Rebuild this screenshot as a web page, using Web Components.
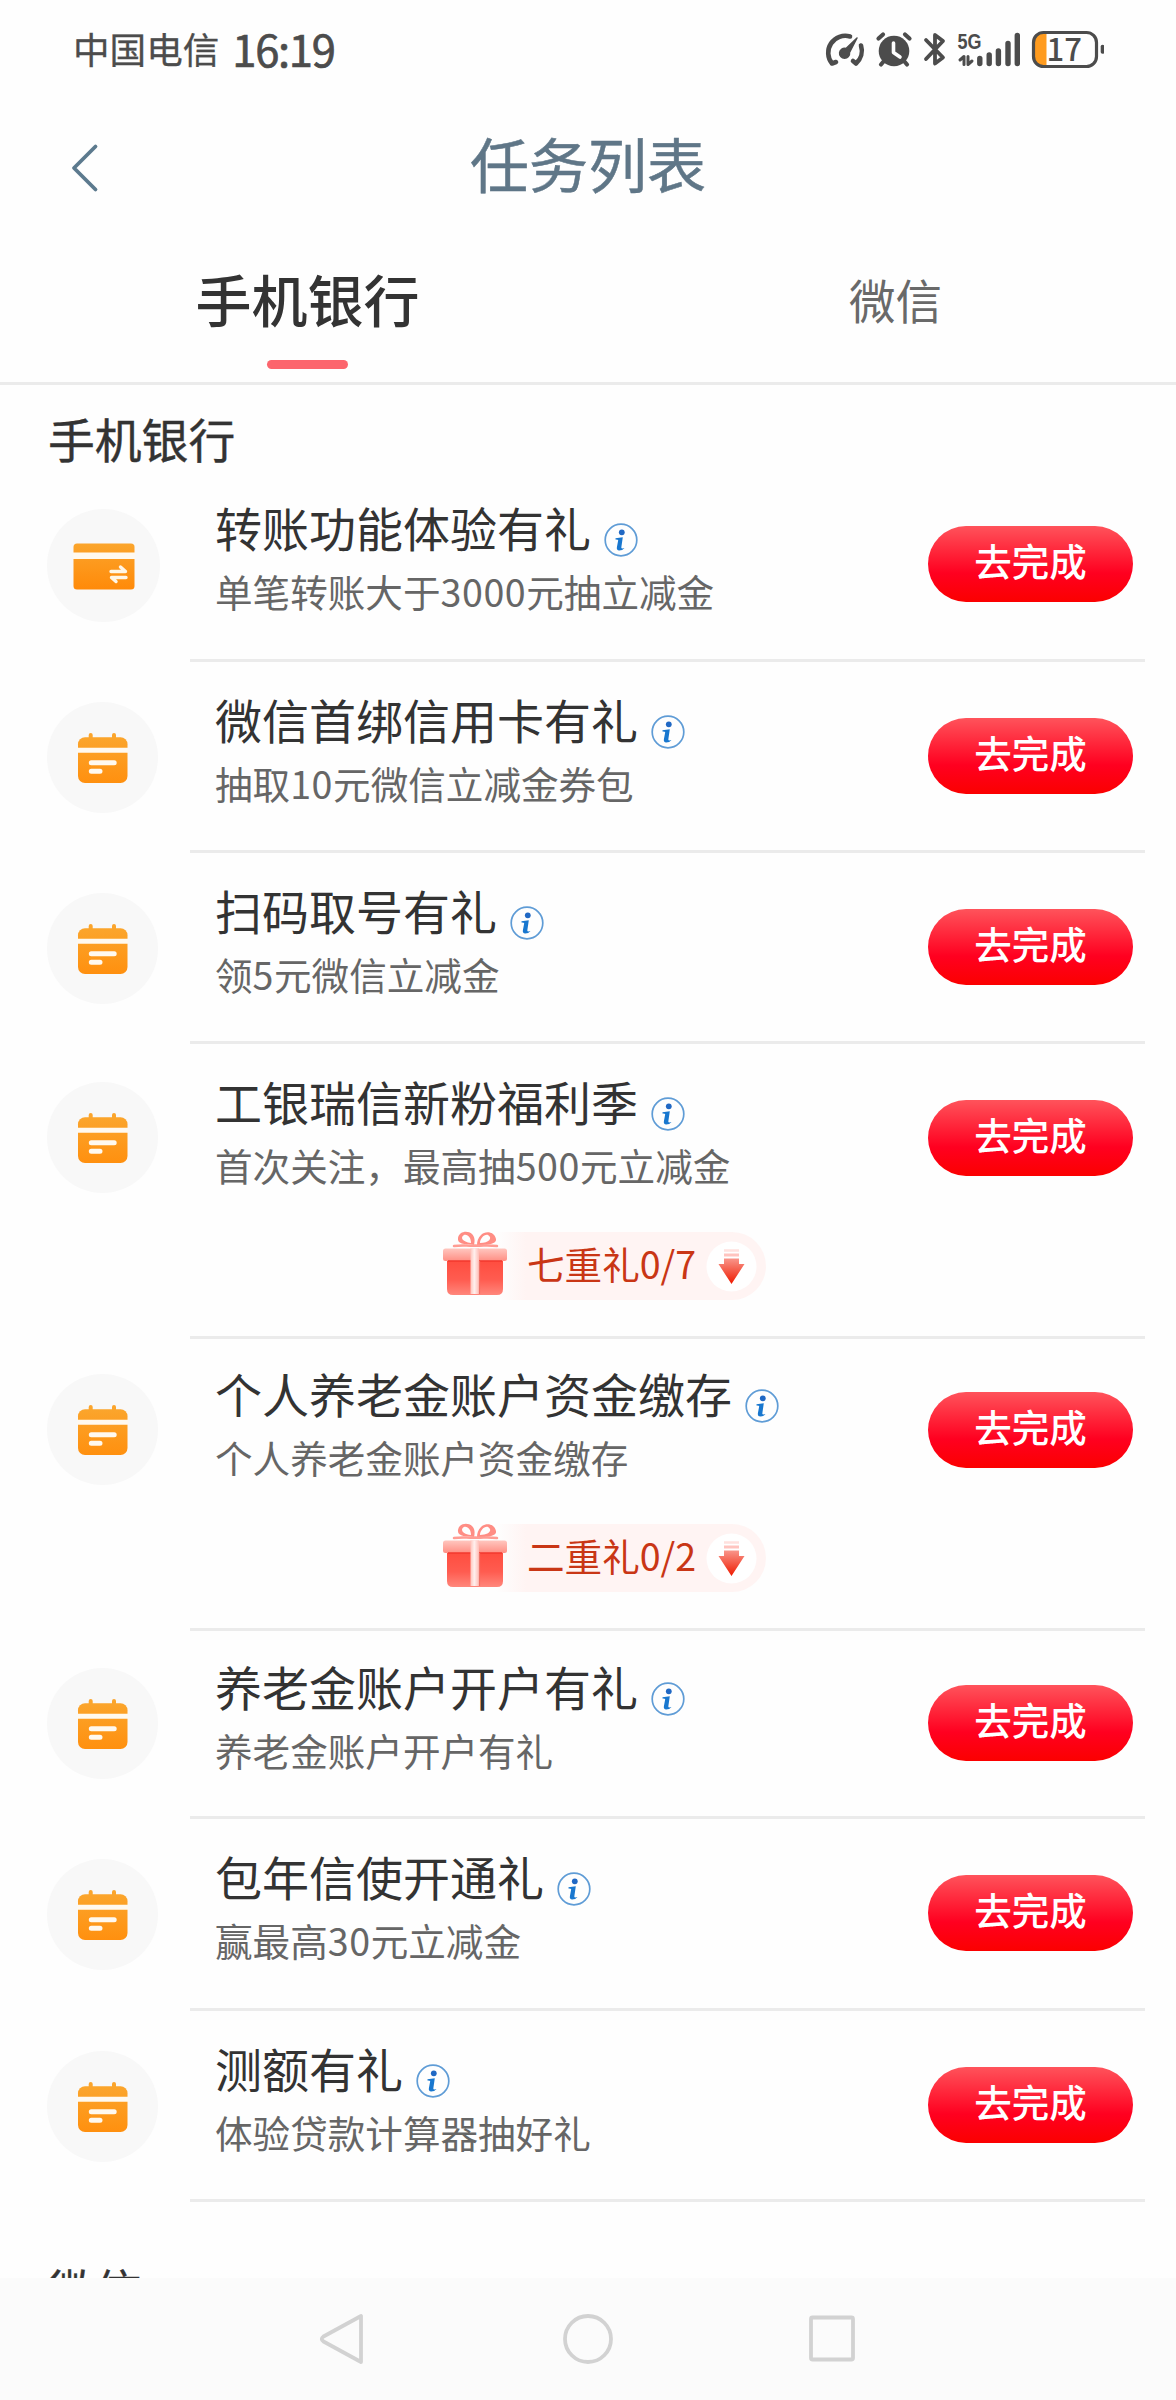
<!DOCTYPE html>
<html lang="zh-CN">
<head>
<meta charset="utf-8">
<title>任务列表</title>
<style>
html,body{margin:0;padding:0;background:#fefefe}
body{width:1176px;height:2400px;overflow:hidden;font-family:"Noto Sans CJK SC","Noto Sans",sans-serif;color:#333}
</style>
</head>
<body>
<task-app></task-app>
<script>
class Base extends HTMLElement{
  connectedCallback(){
    if(this.shadowRoot) return;
    this.attachShadow({mode:'open'}).innerHTML='<style>*{box-sizing:border-box}svg{display:block;flex:none}</style>'+this.render();
  }
}
customElements.define('status-bar',class extends Base{
  render(){return `<style>
  :host{display:flex;height:100px;padding:0 72px 0 73px;justify-content:space-between;color:#4c4c4c;flex:none}
  .l{display:flex;height:98px;align-items:center;line-height:98px}
  .c{font-size:36.6px;margin-right:13px;-webkit-text-stroke:.3px #4c4c4c}
  .t{font-size:43.5px;letter-spacing:-1.3px;-webkit-text-stroke:.7px #4c4c4c}
  .r{display:flex;height:100px;align-items:center}
  </style>
  <div class="l"><span class="c">中国电信</span><span class="t">16:19</span></div>
  <div class="r"><svg width="284" height="60" viewBox="820 20 284 60" fill="none" stroke="#4c4c4c" stroke-linecap="round" stroke-linejoin="round">
    <g stroke-width="4.6"><path d="M850 36.5A17 17 0 0 0 832 63.5L836 62M861 45.5A17 17 0 0 1 856 63.5L853 61"/></g>
    <path d="M857 38L846 48.5A5 5 0 1 0 849.5 52.5Z" fill="#4c4c4c" stroke-width="1.5"/>
    <circle cx="894" cy="51" r="15.3" fill="#4c4c4c" stroke="none"/>
    <path d="M878.5 38.5L883 34.5M909.5 38.5L905 34.5M884 61L881 64.5M904 61L907 64.5" stroke-width="4.2"/>
    <path d="M893.5 43V52.5L900 57" stroke="#fefefe" stroke-width="3.6"/>
    <path d="M926 40L943 57.5L935 63.5V35L943 41L926 59" stroke-width="3.8"/>
    <text x="957.5" y="48.5" font-family="Liberation Sans" font-size="22" font-weight="700" textLength="24" lengthAdjust="spacingAndGlyphs" fill="#4c4c4c" stroke="none">5G</text>
    <path d="M960 60L964 56.5V64.5M968 56.5V64.5L972 61" stroke-width="3"/>
    <path d="M979.8 58.5V63.5M989.2 55V63.5M998.4 51V63.5M1008 43.5V63.5M1017.3 35.5V63.5" stroke-width="5.4"/>
    <path d="M1046.5 33H1041Q1033.5 33 1033.5 41V57Q1033.5 65.5 1041 65.5H1046.5Z" fill="#ff9b1e" stroke="none"/>
    <rect x="1033.5" y="32.5" width="63" height="34" rx="10" stroke-width="3.2"/>
    <path d="M1102.5 46.5V52" stroke-width="3.6"/>
    <text x="1046.5" y="60.8" font-family="Noto Sans CJK SC" font-size="31" font-weight="500" fill="#4c4c4c" stroke="none">17</text>
  </svg></div>`}
});
customElements.define('title-bar',class extends Base{
  render(){return `<style>
  :host{display:grid;grid-template-columns:1fr auto 1fr;height:132px;align-items:center;color:#5f7687;flex:none}
  svg{margin-left:69px}
  h1{margin:0;font-size:59px;font-weight:400;line-height:126px;height:132px;-webkit-text-stroke:.5px #5f7687}
  </style><svg width="32" height="56" viewBox="0 0 32 56" fill="none" stroke="#5c7a8e" stroke-width="3.8" stroke-linecap="round" stroke-linejoin="round"><path d="M26.5 8.5L5 30L26.5 51.5"/></svg><h1><slot></slot></h1>`}
});
customElements.define('tab-item',class extends Base{
  render(){return `<style>
  :host{display:flex;flex-direction:column;align-items:center;flex:1;padding-left:27px;color:#696969;font-size:46.5px;line-height:134px;height:150px}
  :host([active]){color:#333;font-size:56px;font-weight:500;line-height:131px}
  i{display:none;width:81px;height:9px;border-radius:5px;background:#fc656d;margin-top:-3px}
  :host([active]) i{display:block}
  </style><span><slot></slot></span><i></i>`}
});
customElements.define('tab-bar',class extends Base{
  render(){return `<style>:host{display:flex;height:153px;border-bottom:3px solid #ebebeb;flex:none}</style><slot></slot>`}
});
customElements.define('section-title',class extends Base{
  render(){return `<style>:host{display:block;padding-left:48px;font-size:46.8px;-webkit-text-stroke:.4px #333;line-height:70px;height:93px;padding-top:18px;flex:none;box-sizing:border-box}</style><slot></slot>`}
});
customElements.define('task-icon',class extends Base{
  render(){const card=this.getAttribute('kind')==='card',s=card?113:111;
  return `<style>:host{display:block;width:${s}px;height:${s}px;border-radius:50%;background:#f8f8f8}</style>`+(card?
  `<svg width="113" height="113" viewBox="47 509 113 113"><defs><linearGradient id="g" x1="0" y1="0" x2="0" y2="1"><stop offset="0" stop-color="#fba52c"/><stop offset="1" stop-color="#ff8a09"/></linearGradient></defs>
  <rect x="73.500" y="543.500" width="61" height="46" rx="3.500" fill="url(#g)"/><path d="M73 552.500H135V559H73Z" fill="#fff9ef"/>
  <path d="M111 571.500H125.500L120.500 567M126 577.500H111.500L116 581.500" stroke="#fff6e6" stroke-width="3.400" fill="none" stroke-linecap="round" stroke-linejoin="round"/></svg>`:
  `<svg width="111" height="111" viewBox="47 702 111 111"><defs><linearGradient id="g" x1="0" y1="0" x2="0" y2="1"><stop offset="0" stop-color="#fba52c"/><stop offset="1" stop-color="#ff900f"/></linearGradient></defs>
  <path d="M90.700 735V741M114 735V741" stroke="#fba52c" stroke-width="4" stroke-linecap="round"/>
  <rect x="78" y="737.300" width="49.500" height="45.700" rx="7" fill="url(#g)"/><path d="M77.500 747.800H128V752.800H77.500Z" fill="#fff9ef"/>
  <path d="M91.300 762.700H114.200M91.300 771.300H100" stroke="#fff9ef" stroke-width="5" stroke-linecap="round"/></svg>`)}
});
customElements.define('info-icon',class extends Base{
  render(){return `<style>:host{display:block}</style><svg width="34" height="34" viewBox="0 0 34 34"><circle cx="17" cy="17" r="15.800" fill="none" stroke="#5f9cd6" stroke-width="1.700"/><circle cx="17.800" cy="9.300" r="2.900" fill="#2068c4"/><path d="M11.500 15.300L18.800 14.200L17.300 24.500Q17.300 26.200 20.500 25Q18.500 27.600 15.200 27.600Q12.300 27.300 12.900 24.300L14.200 17.300Q14.200 16.300 11.500 16.400Z" fill="#1877cf"/></svg>`}
});
customElements.define('gift-badge',class extends Base{
  render(){return `<style>
  :host{display:flex;width:330px;height:68px;align-items:center;color:#c93615;font-size:37.6px;background:linear-gradient(90deg,transparent 60px,#fff4f3 90px);border-radius:34px;white-space:nowrap}
  .g{margin:-4px 19px 0 6px}
  span{line-height:61px;height:68px}
  .a{margin-left:auto;margin-right:9px}
  </style>
  <svg class="g" width="66" height="68" viewBox="0 0 66 68"><defs>
  <linearGradient id="b" x1="0" y1="0" x2="0" y2="1"><stop offset="0" stop-color="#ff4a3c"/><stop offset=".6" stop-color="#ff5c50"/><stop offset="1" stop-color="#ff877c"/></linearGradient>
  <linearGradient id="l" x1="0" y1="0" x2="0" y2="1"><stop offset="0" stop-color="#ffc6bf"/><stop offset="1" stop-color="#ff8f84"/></linearGradient>
  <linearGradient id="r" x1="0" y1="0" x2="1" y2="0"><stop offset="0" stop-color="#ffc4bc"/><stop offset=".45" stop-color="#fff0ee"/><stop offset="1" stop-color="#ffbdb6"/></linearGradient></defs>
  <path d="M5 27H61V59Q61 65 55 65H11Q5 65 5 59Z" fill="url(#b)"/>
  <rect x="1" y="18.500" width="64" height="12.500" rx="2.500" fill="url(#l)"/><path d="M6 31H60" stroke="#f3382e" stroke-width="1.500"/>
  <path d="M28.500 18.500H37V64H28.500Z" fill="url(#r)"/><path d="M37.500 31V64" stroke="#ee7268" stroke-width="1.200"/>
  <path fill-rule="evenodd" fill="#ff8d84" d="M32 15C25 14 15 15 16 8C17 1 26 0 30 4C33 7 33 11 32 15ZM29 13C29 8 26 4 22 5C18 7 20 12 29 13ZM35 15C42 15 55 15 54 9C52 1 43 1 39 5C36 8 35 11 35 15ZM38 13C38 9 42 4 46 5C51 8 47 13 38 13Z"/>
  <path d="M12 16C20 15 26 16 33 15.500C40 16 46 15 55 16" fill="none" stroke="#ff9c93" stroke-width="2.500" stroke-linecap="round"/></svg>
  <span><slot></slot></span>
  <svg class="a" width="51" height="51" viewBox="0 0 51 51"><defs><linearGradient id="d" x1="0" y1="0" x2="0" y2="1"><stop offset="0" stop-color="#f9958a"/><stop offset="1" stop-color="#ef1a00"/></linearGradient></defs>
  <circle cx="25.500" cy="25.500" r="25" fill="#fff"/><path d="M18 9.500H33" stroke="#ffe1de" stroke-width="2.500"/><path d="M18 14H33" stroke="#ffc4bf" stroke-width="3"/><path d="M18 17.500H33V23H38.500L25.500 43L12.500 23H18Z" fill="url(#d)"/></svg>`}
});
customElements.define('go-button',class extends Base{
  render(){return `<style>:host{display:block}button{display:block;width:205px;height:76px;border:0;border-radius:38px;padding:0 0 9px;background:linear-gradient(#ff535b,#ff2036 38%,#ff0020 62%,#fb0000);color:#fff;font:500 37.5px/67px "Noto Sans CJK SC",sans-serif;white-space:nowrap}</style><button><slot></slot></button>`}
});
customElements.define('task-row',class extends Base{
  render(){const h=this.getAttribute('h')||191,card=this.getAttribute('kind')==='card',dy=+(this.getAttribute('dy')||8),iy=this.getAttribute('iy')||40;
  const sub=this.getAttribute('sub').replace(/\d+/g,'<span class="n">$&</span>');
  return `<style>
  :host{display:flex;box-sizing:border-box;height:${h}px;padding-left:47px;padding-right:31px;flex:none}
  .ic{width:143px;flex:none;padding-top:${iy}px}
  .main{flex:1;display:flex;flex-direction:column;border-bottom:3px solid #ebebeb;padding-top:${dy}px}
  .row{display:flex;justify-content:space-between;padding:0 12px 0 25px}
  .h{display:flex;height:70px;padding-top:14px;font-size:47px;line-height:70px}
  .tt{white-space:nowrap}
  info-icon{margin:31px 0 0 13px}
  .s{font-size:37.6px;line-height:56px;color:#666;margin-top:15px;white-space:nowrap}
  .n{letter-spacing:.6px}
  go-button{padding-top:48px}
  .b{display:flex;padding-left:246px;margin-top:39px}
  </style>
  <div class="ic"><task-icon kind="${card?'card':'cal'}"></task-icon></div>
  <div class="main"><div class="row"><div><div class="h"><span class="tt">${this.getAttribute('name')}</span><info-icon></info-icon></div><div class="s">${sub}</div></div><go-button>去完成</go-button></div>
  ${this.getAttribute('gift')?`<div class="b"><gift-badge>${this.getAttribute('gift')}</gift-badge></div>`:''}</div>`}
});
customElements.define('nav-bar',class extends Base{
  render(){return `<style>:host{display:flex;height:122px;background:#fbfbfb;justify-content:center;flex:none}</style>
  <svg width="1176" height="122" viewBox="0 2278 1176 122" fill="none" stroke="#d2d2d2" stroke-width="3.800" stroke-linejoin="round"><path d="M361 2316V2362L323.500 2341.500Q320 2339 323.500 2336.500Z"/><circle cx="588" cy="2339" r="23"/><rect x="811" y="2317.500" width="42" height="42" rx="1.500"/></svg>`}
});
customElements.define('task-app',class extends Base{
  render(){return `<style>
  :host{display:flex;flex-direction:column;width:1176px;height:2400px;background:#fefefe}
  .list{flex:1;min-height:0;overflow:hidden;display:flex;flex-direction:column}
  .next{margin-top:34px}
  </style>
  <status-bar></status-bar><title-bar>任务列表</title-bar>
  <tab-bar><tab-item active>手机银行</tab-item><tab-item>微信</tab-item></tab-bar>
  <div class="list"><section-title>手机银行</section-title>
  <task-row kind="card" h="184" dy="0" iy="31" name="转账功能体验有礼" sub="单笔转账大于3000元抽立减金"></task-row>
  <task-row name="微信首绑信用卡有礼" sub="抽取10元微信立减金券包"></task-row>
  <task-row name="扫码取号有礼" sub="领5元微信立减金"></task-row>
  <task-row h="295" iy="38" name="工银瑞信新粉福利季" sub="首次关注，最高抽500元立减金" gift="七重礼0/7"></task-row>
  <task-row h="292" dy="5" iy="35" name="个人养老金账户资金缴存" sub="个人养老金账户资金缴存" gift="二重礼0/2"></task-row>
  <task-row h="188" dy="6" iy="37" name="养老金账户开户有礼" sub="养老金账户开户有礼"></task-row>
  <task-row h="192" dy="8" iy="40" name="包年信使开通礼" sub="赢最高30元立减金"></task-row>
  <task-row name="测额有礼" sub="体验贷款计算器抽好礼"></task-row>
  <section-title class="next">微信</section-title></div>
  <nav-bar></nav-bar>`}
});
</script>
</body>
</html>
